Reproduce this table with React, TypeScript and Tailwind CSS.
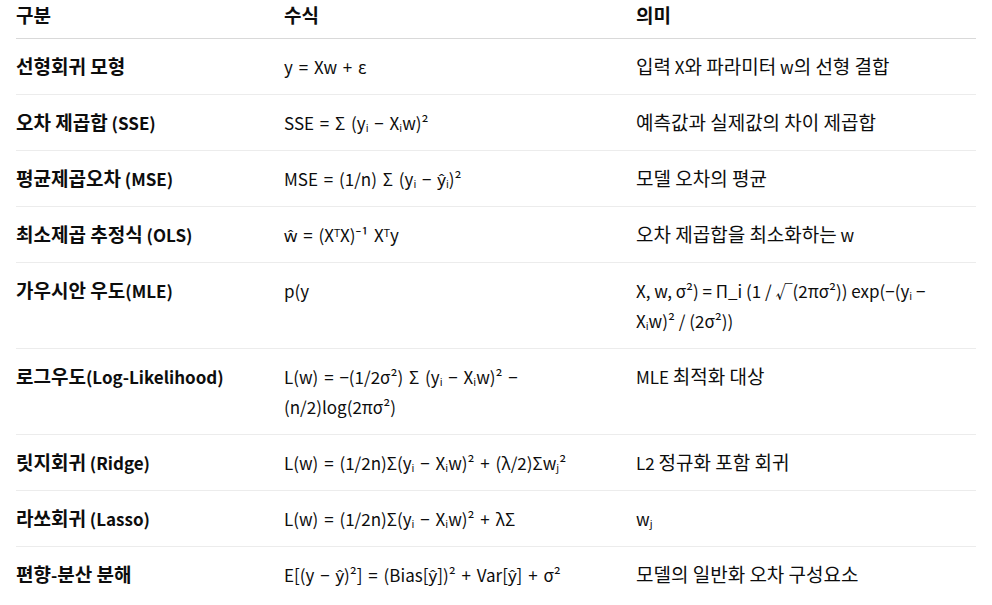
import React from "react";

interface Row {
  name: string;
  formula: string;
  meaning: string;
}

const rows: Row[] = [
  { name: "선형회귀 모형", formula: "y = Xw + ε", meaning: "입력 X와 파라미터 w의 선형 결합" },
  { name: "오차 제곱합 (SSE)", formula: "SSE = Σ (yᵢ − Xᵢw)²", meaning: "예측값과 실제값의 차이 제곱합" },
  { name: "평균제곱오차 (MSE)", formula: "MSE = (1/n) Σ (yᵢ − ŷᵢ)²", meaning: "모델 오차의 평균" },
  { name: "최소제곱 추정식 (OLS)", formula: "ŵ = (XᵀX)⁻¹ Xᵀy", meaning: "오차 제곱합을 최소화하는 w" },
  {
    name: "가우시안 우도(MLE)",
    formula: "p(y",
    meaning: "X, w, σ²) = Π_i (1 / √(2πσ²)) exp(−(yᵢ − Xᵢw)² / (2σ²))",
  },
  {
    name: "로그우도(Log-Likelihood)",
    formula: "L(w) = −(1/2σ²) Σ (yᵢ − Xᵢw)² − (n/2)log(2πσ²)",
    meaning: "MLE 최적화 대상",
  },
  { name: "릿지회귀 (Ridge)", formula: "L(w) = (1/2n)Σ(yᵢ − Xᵢw)² + (λ/2)Σwⱼ²", meaning: "L2 정규화 포함 회귀" },
  { name: "라쏘회귀 (Lasso)", formula: "L(w) = (1/2n)Σ(yᵢ − Xᵢw)² + λΣ", meaning: "wⱼ" },
  { name: "편향-분산 분해", formula: "E[(y − ŷ)²] = (Bias[ŷ])² + Var[ŷ] + σ²", meaning: "모델의 일반화 오차 구성요소" },
];

// Hangul runs are set a bit larger so they take the width of the wide Korean face in the shot
function Ko({ text }: { text: string }) {
  const parts = text.split(/([\uAC00-\uD7A3](?:[\uAC00-\uD7A3 ]*[\uAC00-\uD7A3])?)/);
  return (
    <>
      {parts.map((part, i) =>
        /[\uAC00-\uD7A3]/.test(part) ? (
          <span key={i} className="text-[19px] leading-[20px]">
            {part}
          </span>
        ) : (
          <React.Fragment key={i}>{part}</React.Fragment>
        )
      )}
    </>
  );
}

export default function App() {
  return (
    <div
      className="min-h-[605px] w-[992px] bg-white px-4 text-[17px] leading-[30px] text-[#0d0d0d]"
      style={{ fontFamily: '"Noto Sans CJK KR", "Noto Sans", sans-serif' }}
    >
      <table className="w-[960px] table-fixed border-collapse text-left">
        <colgroup>
          <col className="w-[268px]" />
          <col className="w-[352px]" />
          <col className="w-[340px]" />
        </colgroup>
        <thead>
          <tr className="border-b border-[#d9d9d9]">
            <th className="pt-px pb-[7px] pr-4 font-bold">
              <Ko text="구분" />
            </th>
            <th className="pt-px pb-[7px] pr-4 font-bold">
              <Ko text="수식" />
            </th>
            <th className="pt-px pb-[7px] pr-4 font-bold">
              <Ko text="의미" />
            </th>
          </tr>
        </thead>
        <tbody>
          {rows.map((row, i) => (
            <tr key={i} className="border-b border-[#ececec] align-top last:border-b-0">
              <td className="pt-[13px] pb-3 pr-4 font-bold">
                <Ko text={row.name} />
              </td>
              <td className="pt-[13px] pb-3 pr-4 [word-spacing:2px]">{row.formula}</td>
              <td className="pt-[13px] pb-3 pr-4">
                <Ko text={row.meaning} />
              </td>
            </tr>
          ))}
        </tbody>
      </table>
    </div>
  );
}
